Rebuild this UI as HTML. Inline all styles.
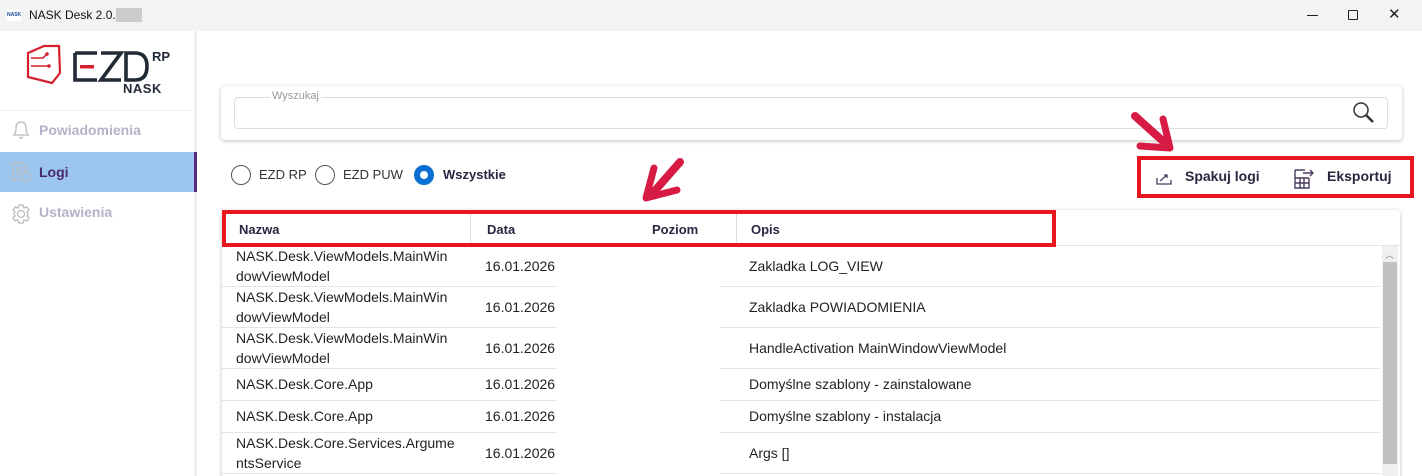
<!DOCTYPE html><html><head><meta charset="utf-8"><style>
*{box-sizing:border-box;margin:0;padding:0}
html,body{width:1422px;height:476px;overflow:hidden}
body{background:#fff;font-family:"Segoe UI","Liberation Sans",sans-serif;position:relative;color:#222}
.a{position:absolute}
.tb{left:0;top:0;width:1422px;height:31px;background:#f3f3f3;font-size:12px}
.side{left:0;top:31px;width:197px;height:445px;background:#fff;border-right:3px solid #f0f0f0}
.nav{position:absolute;left:0;width:197px;height:40px;font-size:14px;font-weight:bold;color:#b8b0c8;padding-left:39px;line-height:40px}
.card{background:#fff;border-radius:4px;box-shadow:0 1px 4px rgba(0,0,0,.25)}
.rb{border:4px solid #e8161e}
.cell{position:absolute;font-size:14px;color:#222;line-height:20px}
.hl{position:absolute;height:1px;background:#e4e4e4}
.hd{position:absolute;font-size:13px;font-weight:bold;color:#2d2440;top:222px}
</style></head><body>
<div class="a tb">
 <div class="a" style="left:7px;top:9px;width:14px;height:12px;background:#fff;font-size:5px;color:#1a4a9a;font-weight:bold;line-height:12px">NASK</div>
 <div class="a" style="left:29px;top:8px;font-size:12px;color:#111">NASK Desk 2.0.<span style="background:#ccc;color:#ccc">____</span></div>
 <div class="a" style="left:1307px;top:15px;width:11px;height:1px;background:#222"></div>
 <div class="a" style="left:1348px;top:10px;width:10px;height:10px;border:1px solid #222;border-radius:1px"></div>
 <div class="a" style="left:1388px;top:5px;font-size:15px;color:#222">✕</div>
</div>
<div class="a side">
 <svg class="a" style="left:0;top:0" width="197" height="80">
  <path d="M28 22 L44 15 L59 15 L60 42 L52 52 L28 46 Z" fill="none" stroke="#d4202c" stroke-width="2.2"/>
  <path d="M31 27 H43 L47 23 M31 35 H49" stroke="#d4202c" stroke-width="1.6" fill="none"/>
  <circle cx="47" cy="23" r="1.8" fill="#d4202c"/><circle cx="49" cy="35" r="1.8" fill="#d4202c"/>
  <path d="M75 22 H97 M75 22 V49 H97 M101 22 H121 L101 49 H121 M126 22 H135 Q147 22 147 35.5 Q147 49 135 49 H126 Z" fill="none" stroke="#222a35" stroke-width="3.6"/>
  <rect x="80" y="34" width="14" height="3.5" fill="#d4202c"/>
  <text x="152" y="30" font-family="Liberation Sans" font-size="13" fill="#222a35" font-weight="bold">RP</text>
  <text x="123" y="62" font-family="Liberation Sans" font-size="13" fill="#222a35" font-weight="bold" letter-spacing="0.5">NASK</text>
 </svg>
 <div class="a" style="left:0;top:79px;width:197px;height:1px;background:#eee"></div>
 <div class="nav" style="top:79px">Powiadomienia</div>
 <div class="nav" style="top:121px;background:#9dc6ee;color:#4a2a6a;border-right:3px solid #5a2a82">Logi</div>
 <div class="nav" style="top:161px">Ustawienia</div>
 <svg class="a" style="left:10px;top:88px" width="22" height="22"><path d="M4 16 Q6 14 6 9 Q6 3 11 3 Q16 3 16 9 Q16 14 18 16 Z M9 18 Q11 20 13 18" fill="none" stroke="#bbb" stroke-width="1.3"/></svg>
 <svg class="a" style="left:10px;top:130px" width="22" height="22"><path d="M3 2 H13 L16 5 V11 M3 2 V19 H10 M6 7 H13 M6 10 H12 M6 13 H10" fill="none" stroke="#bbb" stroke-width="1.3"/><circle cx="16" cy="16" r="4.5" fill="none" stroke="#bbb" stroke-width="1.3"/></svg>
 <svg class="a" style="left:10px;top:172px" width="22" height="22"><circle cx="11" cy="11" r="3.5" fill="none" stroke="#bbb" stroke-width="1.3"/><path d="M9 2 H13 L14 5 L17 4 L19 7 L17 9 L18 11 L17 13 L19 15 L17 18 L14 17 L13 20 H9 L8 17 L5 18 L3 15 L5 13 L4 11 L5 9 L3 7 L5 4 L8 5 Z" fill="none" stroke="#bbb" stroke-width="1.3"/></svg>
</div>
<div class="a card" style="left:221px;top:86px;width:1181px;height:54px"></div>
<div class="a" style="left:234px;top:97px;width:1154px;height:32px;border:1px solid #ddd;border-radius:4px"></div>
<div class="a" style="left:270px;top:90px;font-size:11px;color:#999;background:#fff;padding:0 2px">Wyszukaj</div>
<svg class="a" style="left:1352px;top:101px" width="24" height="24"><circle cx="9" cy="9" r="7" fill="none" stroke="#333" stroke-width="1.5"/><path d="M14 14 L21 21" stroke="#333" stroke-width="2.5"/></svg>
<div class="a" style="left:231px;top:165px;width:20px;height:20px;border:1.5px solid #555;border-radius:50%"></div>
<div class="a" style="left:259px;top:167px;font-size:13px;color:#333">EZD RP</div>
<div class="a" style="left:315px;top:165px;width:20px;height:20px;border:1.5px solid #555;border-radius:50%"></div>
<div class="a" style="left:343px;top:167px;font-size:13px;color:#333">EZD PUW</div>
<div class="a" style="left:414px;top:165px;width:20px;height:20px;border:6px solid #0a6fd0;border-radius:50%;background:#fff"></div>
<div class="a" style="left:443px;top:167px;font-size:13px;font-weight:bold;color:#2d2440">Wszystkie</div>
<div class="a rb" style="left:1137px;top:156px;width:277px;height:42px"></div>
<svg class="a" style="left:1156px;top:172px" width="18" height="14"><path d="M1 6 V12 H15 V8 M4 9 L11 3 M8 3 H11 V6" fill="none" stroke="#4a3c60" stroke-width="1.3"/></svg>
<div class="a" style="left:1185px;top:168px;font-size:14px;font-weight:bold;color:#2d2440">Spakuj logi</div>
<svg class="a" style="left:1293px;top:166px" width="24" height="24"><path d="M2 4 H12 M2 4 V22 H16 V12 M2 12 H16 M7 12 V22 M11 12 V22 M2 17 H16 M10 7 H20 M17 4 L20 7 L17 10" fill="none" stroke="#4a3c60" stroke-width="1.4"/></svg>
<div class="a" style="left:1327px;top:168px;font-size:14px;font-weight:bold;color:#2d2440">Eksportuj</div>
<div class="a card" style="left:222px;top:210px;width:1178px;height:276px"></div>
<div class="a" style="left:470px;top:214px;width:1px;height:32px;background:#ddd"></div>
<div class="a" style="left:736px;top:214px;width:1px;height:32px;background:#ddd"></div>
<div class="hl" style="left:222px;top:245px;width:1178px"></div>
<div class="hd" style="left:239px">Nazwa</div>
<div class="hd" style="left:487px">Data</div>
<div class="hd" style="left:652px">Poziom</div>
<div class="hd" style="left:751px">Opis</div>
<div class="a rb" style="left:222px;top:210px;width:834px;height:37px"></div>
<div class="a" style="left:1382px;top:246px;width:16px;height:230px;background:#f0f0f0"></div>
<div class="a" style="left:1383px;top:262px;width:14px;height:202px;background:#c1c1c1"></div>
<div class="a" style="left:1385px;top:248px;font-size:9px;color:#888">︿</div>
<div class="cell" style="left:236px;top:246px">NASK.Desk.ViewModels.MainWin<br>dowViewModel</div>
<div class="cell" style="left:485px;top:256px">16.01.2026</div><div class="cell" style="left:749px;top:256px">Zakladka LOG_VIEW</div>
<div class="hl" style="left:222px;top:286px;width:335px"></div><div class="hl" style="left:720px;top:286px;width:660px"></div>
<div class="cell" style="left:236px;top:287px">NASK.Desk.ViewModels.MainWin<br>dowViewModel</div>
<div class="cell" style="left:485px;top:297px">16.01.2026</div><div class="cell" style="left:749px;top:297px">Zakladka POWIADOMIENIA</div>
<div class="hl" style="left:222px;top:327px;width:335px"></div><div class="hl" style="left:720px;top:327px;width:660px"></div>
<div class="cell" style="left:236px;top:328px">NASK.Desk.ViewModels.MainWin<br>dowViewModel</div>
<div class="cell" style="left:485px;top:338px">16.01.2026</div><div class="cell" style="left:749px;top:338px">HandleActivation MainWindowViewModel</div>
<div class="hl" style="left:222px;top:368px;width:335px"></div><div class="hl" style="left:720px;top:368px;width:660px"></div>
<div class="cell" style="left:236px;top:374px">NASK.Desk.Core.App</div>
<div class="cell" style="left:485px;top:374px">16.01.2026</div><div class="cell" style="left:749px;top:374px">Domyślne szablony - zainstalowane</div>
<div class="hl" style="left:222px;top:400px;width:335px"></div><div class="hl" style="left:720px;top:400px;width:660px"></div>
<div class="cell" style="left:236px;top:406px">NASK.Desk.Core.App</div>
<div class="cell" style="left:485px;top:406px">16.01.2026</div><div class="cell" style="left:749px;top:406px">Domyślne szablony - instalacja</div>
<div class="hl" style="left:222px;top:432px;width:335px"></div><div class="hl" style="left:720px;top:432px;width:660px"></div>
<div class="cell" style="left:236px;top:433px">NASK.Desk.Core.Services.Argume<br>ntsService</div>
<div class="cell" style="left:485px;top:443px">16.01.2026</div><div class="cell" style="left:749px;top:443px">Args []</div>
<div class="hl" style="left:222px;top:473px;width:335px"></div><div class="hl" style="left:720px;top:473px;width:660px"></div>
<svg class="a" style="left:0;top:0" width="1422" height="476">
 <path d="M680 162 L652 194" stroke="#d81b45" stroke-width="8" stroke-linecap="round"/>
 <path d="M654 168 L646 198 L677 190" fill="none" stroke="#d81b45" stroke-width="7" stroke-linecap="round" stroke-linejoin="round"/>
 <path d="M1135 116 L1165 143" stroke="#d81b45" stroke-width="8" stroke-linecap="round"/>
 <path d="M1140 146 L1170 148 L1163 119" fill="none" stroke="#d81b45" stroke-width="7" stroke-linecap="round" stroke-linejoin="round"/>
</svg>
</body></html>
